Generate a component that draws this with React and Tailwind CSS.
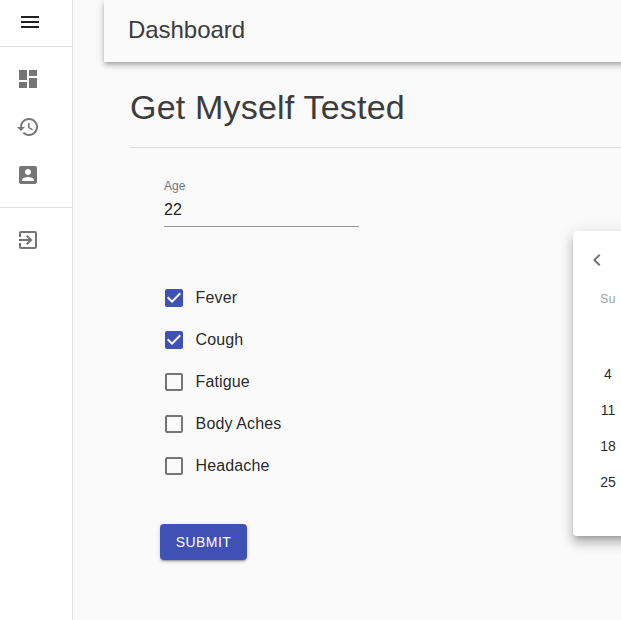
import React from "react";

const Icon = ({ d, className }) => (
  <svg viewBox="0 0 24 24" className={"size-6 fill-current " + (className || "")}>
    <path d={d} />
  </svg>
);

const MENU = "M3 18h18v-2H3v2zm0-5h18v-2H3v2zm0-7v2h18V6H3z";
const DASHBOARD = "M3 13h8V3H3v10zm0 8h8v-6H3v6zm10 0h8V11h-8v10zm0-18v6h8V3h-8z";
const HISTORY = "M13 3c-4.97 0-9 4.03-9 9H1l3.89 3.89.07.14L9 12H6c0-3.87 3.13-7 7-7s7 3.13 7 7-3.13 7-7 7c-1.93 0-3.68-.79-4.94-2.06l-1.42 1.42C8.27 19.99 10.51 21 13 21c4.97 0 9-4.03 9-9s-4.03-9-9-9zm-1 5v5l4.28 2.54.72-1.21-3.5-2.08V8H12z";
const ACCOUNT = "M3 5v14c0 1.1.89 2 2 2h14c1.1 0 2-.9 2-2V5c0-1.1-.9-2-2-2H5c-1.11 0-2 .9-2 2zm12 4c0 1.66-1.34 3-3 3s-3-1.34-3-3 1.34-3 3-3 3 1.34 3 3zm-9 8c0-2 4-3.1 6-3.1s6 1.1 6 3.1v1H6v-1z";
const EXIT = "M10.09 15.59L11.5 17l5-5-5-5-1.41 1.41L12.67 11H3v2h9.67l-2.58 2.59zM19 3H5c-1.11 0-2 .9-2 2v4h2V5h14v14H5v-4H3v4c0 1.1.89 2 2 2h14c1.1 0 2-.9 2-2V5c0-1.1-.9-2-2-2z";
const CHECKED = "M19 3H5c-1.11 0-2 .9-2 2v14c0 1.1.89 2 2 2h14c1.11 0 2-.9 2-2V5c0-1.1-.89-2-2-2zm-9 14l-5-5 1.41-1.41L10 14.17l7.59-7.59L19 8l-9 9z";
const UNCHECKED = "M19 5v14H5V5h14m0-2H5c-1.1 0-2 .9-2 2v14c0 1.1.9 2 2 2h14c1.1 0 2-.9 2-2V5c0-1.1-.9-2-2-2z";
const CHEVRON = "M15.41 16.59L10.83 12l4.58-4.59L14 6l-6 6 6 6 1.41-1.41z";

const symptoms = [
  ["Fever", true],
  ["Cough", true],
  ["Fatigue", false],
  ["Body Aches", false],
  ["Headache", false],
];

function Sidebar() {
  return (
    <aside className="flex w-[73px] shrink-0 flex-col border-r border-[#e0e0e0] bg-white text-[#757575]">
      <div className="flex h-[47px] items-start border-b border-[#e0e0e0] pl-[18px] pt-[10px] text-[#212121]">
        <Icon d={MENU} />
      </div>
      <nav className="flex h-[161px] flex-col gap-6 border-b border-[#e0e0e0] pl-4 pt-5">
        <Icon d={DASHBOARD} />
        <Icon d={HISTORY} />
        <Icon d={ACCOUNT} />
      </nav>
      <div className="pl-4 pt-5">
        <Icon d={EXIT} />
      </div>
    </aside>
  );
}

function Calendar() {
  return (
    <section className="mt-[83px] h-[305px] w-[310px] shrink-0 rounded bg-white pl-[17px] shadow-[0_5px_5px_-3px_rgba(0,0,0,0.2),0_8px_10px_1px_rgba(0,0,0,0.14),0_3px_14px_2px_rgba(0,0,0,0.12)]">
      <div className="flex h-[57px] items-center text-[#757575]">
        <Icon d={CHEVRON} className="-ml-[5px]" />
      </div>
      <div className="w-9 text-center text-xs leading-[22px] tracking-[0.4px] text-[#9e9e9e]">Su</div>
      <div className="mt-[46px] flex w-9 flex-col text-center text-sm leading-9">
        {[4, 11, 18, 25].map((day) => (
          <span key={day}>{day}</span>
        ))}
      </div>
    </section>
  );
}

export default function App() {
  return (
    <div className="flex h-[620px] w-[621px] overflow-hidden bg-[#fafafa] font-['Liberation_Sans',Arial,sans-serif] text-[rgba(0,0,0,0.87)]">
      <Sidebar />
      <main className="min-w-0 flex-1 overflow-hidden pl-[31px]">
        <header className="flex h-[62px] w-[560px] items-start pl-6 pt-[14px] shadow-[0_2px_4px_-1px_rgba(0,0,0,0.2),0_4px_5px_0_rgba(0,0,0,0.14),0_1px_10px_0_rgba(0,0,0,0.12)]">
          <h1 className="text-2xl leading-8 tracking-[-0.04px] text-[#3c3c3c]">Dashboard</h1>
        </header>
        <h2 className="ml-[26px] flex h-[86px] w-[560px] items-start border-b border-[#dcdcdc] pt-[24px] text-[34px] leading-[42px] tracking-[0.2px] text-[#3c3c3c]">
          Get Myself Tested
        </h2>
        <div className="flex w-[800px]">
          <form className="w-[469px] shrink-0 pl-[60px] pt-[30px]">
            <label className="block w-[195px] border-b border-[#949494] text-xs leading-4 text-[#757575]">
              Age
              <span className="block h-[32px] pt-[4px] text-base leading-[24px] text-[#212121]">22</span>
            </label>
            <div className="mt-[50px] flex flex-col">
              {symptoms.map(([name, checked]) => (
                <label key={name} className="-ml-[2px] flex h-[42px] items-center gap-[9.6px] text-base tracking-[0.12px]">
                  <Icon d={checked ? CHECKED : UNCHECKED} className={checked ? "text-[#3f51b5]" : "text-[#757575]"} />
                  {name}
                </label>
              ))}
            </div>
            <button
              type="button"
              className="-ml-1 mt-[37px] h-9 w-[87px] rounded bg-[#3f51b5] text-sm font-medium uppercase tracking-[0.4px] text-white shadow-[0_3px_1px_-2px_rgba(0,0,0,0.2),0_2px_2px_0_rgba(0,0,0,0.14),0_1px_5px_0_rgba(0,0,0,0.12)]"
            >
              Submit
            </button>
          </form>
          <Calendar />
        </div>
      </main>
    </div>
  );
}
